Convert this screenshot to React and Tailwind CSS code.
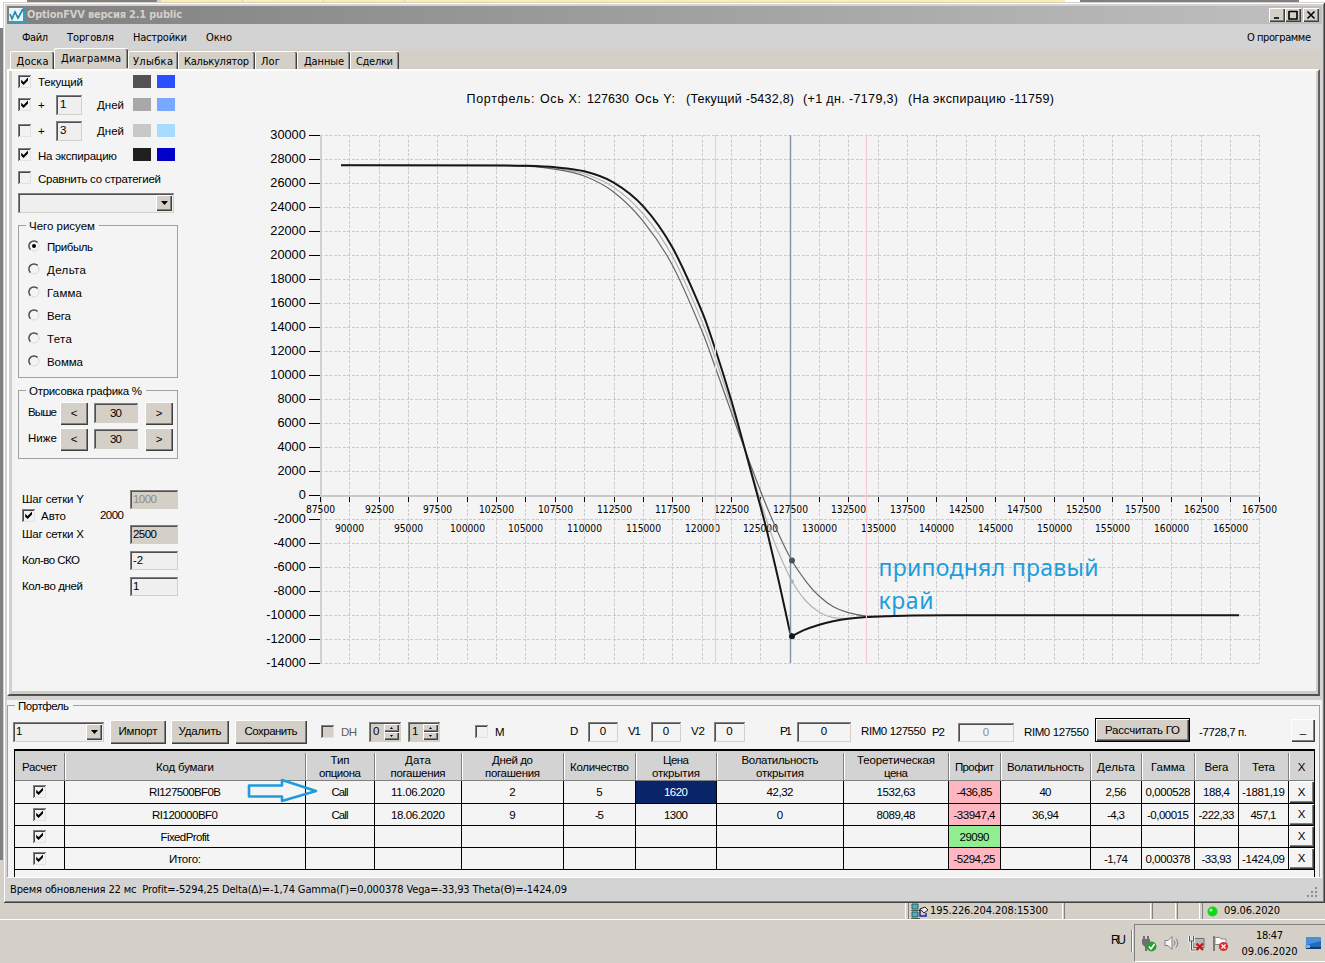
import React, { useLayoutEffect, useRef } from 'react';

const RAISED = 'shadow-[inset_1px_1px_0_#fff,inset_-1px_-1px_0_#404040,inset_-2px_-2px_0_#808080]';
const SUNKEN = 'shadow-[inset_1px_1px_0_#808080,inset_-1px_-1px_0_#d4d0c8,inset_2px_2px_0_#505050]';
const UI = "font-['Liberation_Sans',sans-serif] text-[11.5px]";
const TAHOMA = "font-['DejaVu_Sans_Condensed','DejaVu_Sans',sans-serif] text-[11px]";

// Single-line label whose tracking is tuned so the text spans exactly `w` pixels.
function T({ w, className = '', children }) {
  const ref = useRef(null);
  useLayoutEffect(() => {
    const el = ref.current;
    el.style.letterSpacing = '0px';
    const natural = el.getBoundingClientRect().width;
    const n = el.textContent.length;
    if (w && n > 1) {
      const s = (w - natural) / (n - 1);
      el.style.letterSpacing = s + 'px';
      el.style.marginRight = -s + 'px';
    }
  }, [w, children]);
  return <span ref={ref} className={'inline-block shrink-0 whitespace-pre leading-[13px] ' + className}>{children}</span>;
}

function Check({ on, className = '', fill = 'bg-[#f2f2f2]' }) {
  return (
    <span className={`inline-flex size-[13px] shrink-0 items-center justify-center ${fill} shadow-[inset_1px_1px_0_#808080,inset_-1px_-1px_0_#e4e2de,inset_2px_2px_0_#484848] ${className}`}>
      {on && (
        <svg width="9" height="9" viewBox="0 0 9 9"><path d="M1.2 2.8v2.900L3.600 8 8 3.500V.6L3.600 5z" fill="#000" /></svg>
      )}
    </span>
  );
}

function Input({ className = '', children }) {
  return <div className={`flex shrink-0 items-center ${SUNKEN} ${className}`}>{children}</div>;
}

function Button({ className = '', children }) {
  return <div className={`flex shrink-0 items-center justify-center bg-[#d4d0c8] ${RAISED} ${className}`}>{children}</div>;
}

function Combo({ className = '', children }) {
  return (
    <div className={`flex shrink-0 items-center justify-between bg-[#efefef] p-[2px] ${SUNKEN} ${className}`}>
      <span className="pl-px">{children}</span>
      <Button className="h-full w-4">
        <svg width="7" height="4" viewBox="0 0 7 4"><path d="M0 0h7L3.5 4z" /></svg>
      </Button>
    </div>
  );
}

function Spin({ className = '', children }) {
  return (
    <div className={`flex h-5 w-8 shrink-0 items-center bg-[#d4d0c8] p-[2px] pl-1 ${SUNKEN} ${className}`}>
      <span className="w-[11px]">{children}</span>
      <div className="flex h-full flex-1 flex-col">
        <Button className="flex-1"><svg width="3" height="2" viewBox="0 0 3 2"><path d="M1.5 0L3 2H0z" /></svg></Button>
        <Button className="flex-1"><svg width="3" height="2" viewBox="0 0 3 2"><path d="M1.5 2L3 0H0z" /></svg></Button>
      </div>
    </div>
  );
}

function GroupTitle({ lead, w, children }) {
  return (
    <div className="flex h-[13px] items-start">
      <div className={'mt-[5px] ' + lead} />
      <T w={w}>{children}</T>
      <div className="mt-[5px] ml-1 h-px flex-1 bg-[#a0a0a0]" />
    </div>
  );
}

const TABS = [
  ['Доска', 32, 'ml-[9px] w-[44px] h-[18px] justify-center', false],
  ['Диаграмма', 60, 'w-[74px] h-5 mb-px pl-[6px]', true],
  ['Улыбка', 40, 'w-[50px] h-[18px] pl-1', false],
  ['Калькулятор', 65, 'w-[77px] h-[18px] pl-[5px]', false],
  ['Лог', 19, 'w-[42px] h-[18px] pl-[5px]', false],
  ['Данные', 40, 'w-[53px] h-[18px] pl-[6px]', false],
  ['Сделки', 37, 'w-[49px] h-[18px] pl-[5px]', false],
];

function Swatches({ a, b, className = '' }) {
  return (
    <div className={'flex gap-[6px] ' + className}>
      <div className={'h-[13px] w-[18px] ' + a} />
      <div className={'h-[13px] w-[18px] ' + b} />
    </div>
  );
}

function SidePanel() {
  return (
    <div className="flex w-[168px] shrink-0 flex-col pl-[6px]">
      <div className="flex h-[21px] items-center">
        <Check on />
        <div className="ml-[7px] w-[95px] pt-[3px]"><T w={45}>Текущий</T></div>
        <Swatches a="bg-[#525252]" b="bg-[#2850ff]" />
      </div>
      <div className="flex h-[25px] items-center">
        <Check on />
        <div className="ml-[7px] w-[18px] pt-[2px]"><T>+</T></div>
        <Input className="h-5 w-[26px] bg-[#efefef] pl-1"><T w={5}>1</T></Input>
        <div className="ml-[15px] w-[36px] pt-[2px]"><T w={27}>Дней</T></div>
        <Swatches a="bg-[#a8a8a8]" b="bg-[#78a8ff]" />
      </div>
      <div className="flex h-[27px] items-center">
        <Check />
        <div className="ml-[7px] w-[18px] pt-[2px]"><T>+</T></div>
        <Input className="h-5 w-[26px] bg-[#efefef] pl-1"><T>3</T></Input>
        <div className="ml-[15px] w-[36px] pt-[2px]"><T w={27}>Дней</T></div>
        <Swatches a="bg-[#c8c8c8]" b="bg-[#a8dcff]" />
      </div>
      <div className="flex h-[21px] items-center">
        <Check on />
        <div className="ml-[7px] w-[95px] pt-[4px]"><T w={79}>На экспирацию</T></div>
        <Swatches a="bg-[#202020]" b="bg-[#0000c8]" />
      </div>
      <div className="flex h-[25px] items-center">
        <Check />
        <div className="ml-[7px] pt-[4px]"><T w={123}>Сравнить со стратегией</T></div>
      </div>
      <Combo className="mt-[3px] h-5 w-[156px]" />

      <div className="mt-[7px] flex h-[158px] w-[160px] flex-col">
        <GroupTitle lead="mr-[3px] h-px w-2 bg-[#a0a0a0]" w={66}>Чего рисуем</GroupTitle>
        <div className="-mt-[8px] flex flex-1 flex-col border border-t-0 border-[#a0a0a0] pl-[9px] pt-[10px]">
          {[['Прибыль', 46], ['Дельта', 39], ['Гамма', 35], ['Вега', 24], ['Тета', 25], ['Вомма', 36]].map(([t, w], i) => (
            <div key={t} className="flex h-[23px] items-center">
              <svg width="12" height="12" viewBox="0 0 12 12" className="mb-[2px] shrink-0">
                <circle cx="6" cy="6" r="5" fill="#f4f4f4" stroke="#dcdad6" />
                <path d="M2.4 9.6A5 5 0 0 1 9.6 2.4" fill="none" stroke="#505050" strokeWidth="1.5" />
                {i === 0 && <circle cx="6" cy="6" r="2" />}
              </svg>
              <div className="ml-[7px] pt-[2px]"><T w={w}>{t}</T></div>
            </div>
          ))}
        </div>
      </div>

      <div className="mt-[7px] flex h-[74px] w-[160px] flex-col">
        <GroupTitle lead="mr-[3px] h-px w-2 bg-[#a0a0a0]" w={113}>Отрисовка графика %</GroupTitle>
        <div className="-mt-[8px] flex flex-1 flex-col border border-t-0 border-[#a0a0a0] pl-[9px] pt-[10px]">
          {['Выше', 'Ниже'].map((t) => (
            <div key={t} className="flex h-[26px] items-center">
              <div className="w-8"><T w={29}>{t}</T></div>
              <Button className="h-[23px] w-[28px]"><T>&lt;</T></Button>
              <Input className="ml-[6px] h-5 w-[44px] justify-center bg-[#d4d0c8]"><T w={12}>30</T></Input>
              <Button className="ml-[7px] h-[23px] w-[28px]"><T>&gt;</T></Button>
            </div>
          ))}
        </div>
      </div>

      <div className="mt-[27px] flex h-[26px] items-center pl-1">
        <div className="w-[108px] pt-px"><T w={62}>Шаг сетки Y</T></div>
        <Input className="h-[19px] w-12 bg-[#d4d0c8] pl-[3px] text-[#8c8a84]"><T w={24}>1000</T></Input>
      </div>
      <div className="-mt-[4px] flex h-[14px] items-center pl-1">
        <Check on />
        <div className="ml-[6px] w-[59px] pt-[3px]"><T w={25}>Авто</T></div>
        <T w={24}>2000</T>
      </div>
      <div className="flex h-6 items-center pl-1">
        <div className="w-[108px] pt-[2px]"><T w={62}>Шаг сетки X</T></div>
        <Input className="h-[19px] w-12 bg-[#d4d0c8] pl-[3px]"><T w={24}>2500</T></Input>
      </div>
      <div className="mt-px flex h-[26px] items-center pl-1">
        <div className="w-[108px] pt-[2px]"><T w={58}>Кол-во СКО</T></div>
        <Input className="h-[19px] w-12 bg-[#efefef] pl-[3px]"><T>-2</T></Input>
      </div>
      <div className="flex h-[26px] items-center pl-1">
        <div className="w-[108px] pt-[2px]"><T w={61}>Кол-во дней</T></div>
        <Input className="h-[19px] w-12 bg-[#efefef] pl-[3px]"><T>1</T></Input>
      </div>
    </div>
  );
}

function smooth(p) {
  let d = `M${p[0][0]} ${p[0][1]}`;
  for (let i = 0; i < p.length - 1; i++) {
    const a = p[i - 1] || p[i], b = p[i], c = p[i + 1], e = p[i + 2] || c;
    const h = (c[0] - b[0]) / 3;
    const m1 = c[0] === a[0] ? 0 : (c[1] - a[1]) / (c[0] - a[0]);
    const m2 = e[0] === b[0] ? 0 : (e[1] - b[1]) / (e[0] - b[0]);
    d += `C${b[0] + h} ${b[1] + m1 * h} ${c[0] - h} ${c[1] - m2 * h} ${c[0]} ${c[1]}`;
  }
  return d;
}

const EXPIRY_LEFT = [[341, 165.3], [490, 165.4], [525.7, 165.8], [555.7, 167.3], [584.3, 171.3], [613.3, 182.3], [643.3, 206.3], [672.3, 247.3], [702.3, 312.3], [715.3, 349.3], [731.7, 401.7], [744, 446], [757.5, 495.5], [766.7, 530], [780, 586.7], [787.3, 620], [790, 632], [792, 636]];
const EXPIRY_RIGHT = [[792, 636], [803.3, 630.3], [819.3, 624.7], [833, 621.3], [848.3, 618.7], [866.7, 617], [886.7, 616.3], [913, 615.5], [950, 615.2], [1239, 615.2]];
const CURRENT = [[341, 165.3], [490, 165.4], [525.7, 166.2], [555.7, 169.3], [584.3, 176], [613.3, 191.7], [643.3, 221.3], [672.3, 265], [702.3, 331.7], [715.3, 367.3], [731.7, 413.3], [745, 450], [762.7, 496.5], [778.3, 533.3], [791.7, 560.3], [806.7, 582.3], [819.3, 596.3], [833.3, 606.7], [848.3, 612.6], [866.7, 616], [900, 616]];
const NEXT = [[341, 165.3], [490, 165.4], [525.7, 166], [555.7, 168.3], [584.3, 173.7], [613.3, 187], [643.3, 214], [672.3, 256], [702.3, 322.3], [715.3, 358.3], [731.7, 407.5], [745, 449], [759, 496.5], [771.7, 535], [783.3, 563.3], [792, 581.3], [805, 600], [819.3, 612.3], [833.3, 617.7], [848, 618.2], [880, 616.5]];

const TITLE = [
  ['Портфель:', 466.5, 68], ['Ось X:', 540, 41], ['127630', 587, 42], ['Ось Y:', 635, 40],
  ['(Текущий -5432,8)', 686, 108], ['(+1 дн. -7179,3)', 803, 95], ['(На экспирацию -11759)', 908, 146],
];

function Chart() {
  const ys = Array.from({ length: 23 }, (_, i) => 30000 - i * 2000);
  const xs = Array.from({ length: 33 }, (_, i) => 87500 + i * 2500);
  const X = (v) => Math.round(320 + ((v - 87500) / 2500) * 29.35) + 0.5;
  const Y = (v) => Math.round(495 - v * 0.012) + 0.5;
  return (
    <svg width="1137" height="619" viewBox="180 71 1137 619" className="shrink-0" fontFamily="'Liberation Sans', sans-serif">
      <g stroke="#cccccc" strokeDasharray="3 1.5" shapeRendering="crispEdges">
        {ys.map((v) => <line key={v} x1="320" x2="1259" y1={Y(v)} y2={Y(v)} />)}
        {xs.map((v) => <line key={v} x1={X(v)} x2={X(v)} y1="135" y2="663" />)}
      </g>
      <g shapeRendering="crispEdges">
        <path d="M320.5 135V663" stroke="#d0d0d0" strokeWidth="2" />
        <path d="M320 495.5H1259" stroke="#c8c8c8" strokeWidth="2" />
        {ys.map((v) => <line key={v} x1="309" x2="320" y1={Y(v)} y2={Y(v)} stroke="#000" />)}
        {xs.map((v) => <line key={v} x1={X(v)} x2={X(v)} y1="497" y2="502" stroke="#000" />)}
      </g>
      {TITLE.map(([t, x, w]) => <text key={t} x={x} y="103" fontSize="12.5" textLength={w}>{t}</text>)}
      {ys.map((v) => {
        const s = String(v);
        const w = s.replace('-', '').length * 7.1 + (v < 0 ? 4 : 0);
        return <text key={v} x={305.8 - w} y={Y(v) + 3.5} fontSize="13.6" textLength={w} lengthAdjust="spacingAndGlyphs">{s}</text>;
      })}
      <g fontFamily="'DejaVu Sans Condensed', 'DejaVu Sans', sans-serif" fontSize="10.4">
        {xs.map((v, i) => {
          const w = String(v).length * 5.85;
          return <text key={v} x={X(v) - w / 2} y={i % 2 ? 532 : 513} textLength={w} lengthAdjust="spacingAndGlyphs">{v}</text>;
        })}
      </g>
      <g fill="none">
        <path d={smooth(NEXT)} stroke="#b4b4b4" strokeWidth="1.2" />
        <path d={smooth(CURRENT)} stroke="#666" strokeWidth="1.2" />
        <path d={smooth(EXPIRY_LEFT)} stroke="#161616" strokeWidth="2" />
        <path d={smooth(EXPIRY_RIGHT)} stroke="#161616" strokeWidth="2" />
        <path d="M715.5 135V663M866.5 135V663" stroke="#f8c8d2" strokeWidth="1.2" />
        <path d="M790.5 135V663" stroke="#8094a8" strokeWidth="1.4" />
      </g>
      <circle cx="792" cy="560.5" r="3" fill="#525252" />
      <circle cx="792" cy="581.5" r="2" fill="#b0b0b0" />
      <circle cx="792" cy="636.3" r="3" fill="#161616" />
      <g fill="#1d9ddb" fontFamily="'Noto Sans', sans-serif" fontSize="23">
        <text x="878.5" y="576" textLength="220">приподнял правый</text>
        <text x="878.5" y="609" textLength="55">край</text>
      </g>
    </svg>
  );
}

const HEAD = [
  [['Расчет', 35]], [['Код бумаги', 58]], [['Тип', 19], ['опциона', 42]], [['Дата', 26], ['погашения', 55]],
  [['Дней до', 41], ['погашения', 55]], [['Количество', 59]], [['Цена', 26], ['открытия', 48]],
  [['Волатильность', 77], ['открытия', 48]], [['Теоретическая', 78], ['цена', 24]], [['Профит', 39]],
  [['Волатильность', 77]], [['Дельта', 38]], [['Гамма', 34]], [['Вега', 24]], [['Тета', 23]], [['X', 8]],
];

const ROWS = [
  [['RI127500BF0B', 72], ['Call', 17], ['11.06.2020', 54], ['2'], ['5'], ['1620', 24], ['42,32', 27], ['1532,63', 39], ['-436,85', 36], ['40', 12], ['2,56', 21], ['0,000528', 45], ['188,4', 27], ['-1881,19', 43]],
  [['RI120000BF0', 66], ['Call', 17], ['18.06.2020', 54], ['9'], ['-5', 9], ['1300', 24], ['0'], ['8089,48', 39], ['-33947,4', 42], ['36,94', 27], ['-4,3', 18], ['-0,00015', 42], ['-222,33', 36], ['457,1', 26]],
  [['FixedProfit', 49], null, null, null, null, null, null, null, ['29090', 30], null, null, null, null, null],
  [['Итого:', 32], null, null, null, null, null, null, null, ['-5294,25', 42], null, ['-1,74', 24], ['0,000378', 45], ['-33,93', 30], ['-1424,09', 43]],
];

function cellTone(r, c) {
  if (r === 0 && c === 5) return 'bg-[#0a246a] text-white';
  if (c === 8) return r === 2 ? 'bg-[#90ee90]' : 'bg-[#ffb6c1]';
  return '';
}

const COLS = 'grid grid-cols-[50px_241px_69px_87px_102px_72px_81px_127px_105px_52px_90px_51px_53px_44px_50px_25px]';

function Portfolio() {
  return (
    <div className="relative ml-[6px] h-[128px] w-[1301px] border-t-2 border-r border-l border-black">
      <div className={COLS + ' h-[30px] border-b border-[#808080] bg-[#d3d3d3]'}>
        {HEAD.map((lines, i) => (
          <div key={i} className="flex items-stretch py-[2px]">
            <div className="flex flex-1 flex-col items-center justify-center pt-px">
              {lines.map(([t, w]) => <T key={t} w={w}>{t}</T>)}
            </div>
            {i < 15 && <div className="w-px bg-[#808080] shadow-[1px_0_0_#fff]" />}
          </div>
        ))}
      </div>
      {ROWS.map((row, r) => (
        <div key={r} className={COLS + ' border-b border-black ' + (r ? 'h-[22px]' : 'h-[23px]')}>
          <div className="flex items-center justify-center border-r border-black pb-px"><Check on /></div>
          {row.map((c, i) => (
            <div key={i} className={'flex items-center justify-center border-r border-black pt-px ' + cellTone(r, i)}>
              {c && <T w={c[1]}>{c[0]}</T>}
            </div>
          ))}
          <div className={'flex items-center justify-center bg-[#f4f4f4] ' + RAISED}><T w={8}>X</T></div>
        </div>
      ))}
      <svg className="absolute top-[27px] left-[232px]" width="72" height="26" viewBox="0 0 72 26">
        <path d="M2 7.5H35V2L69 13 35 23V18.5H2Z" fill="none" stroke="#1d9ddb" strokeWidth="2.6" strokeLinejoin="round" />
      </svg>
    </div>
  );
}

function Toolbar() {
  return (
    <div className="flex h-[27px] shrink-0 items-center pl-[5px]">
      <Combo className="h-5 w-[91px]"><T>1</T></Combo>
      <Button className="ml-[6px] h-6 w-[56px]"><T w={39}>Импорт</T></Button>
      <Button className="ml-[5px] h-6 w-[58px]"><T w={43}>Удалить</T></Button>
      <Button className="ml-[6px] h-6 w-[72px]"><T w={53}>Сохранить</T></Button>
      <Check className="ml-[14px]" fill="bg-[#d4d0c8]" />
      <div className="ml-[7px] w-[28px] pt-[3px] text-[#606060]"><T w={16}>DH</T></div>
      <Spin className="mt-px"><T>0</T></Spin>
      <Spin className="mt-px ml-[7px]"><T>1</T></Spin>
      <Check className="ml-[35px]" />
      <div className="ml-[7px] w-[75px] pt-[2px]"><T>M</T></div>
      <div className="w-[18px]"><T w={7}>D</T></div>
      <Input className="h-5 w-[30px] justify-center"><T>0</T></Input>
      <div className="ml-[10px] w-[23px]"><T w={13}>V1</T></div>
      <Input className="h-5 w-[30px] justify-center"><T>0</T></Input>
      <div className="ml-[10px] w-[23px]"><T w={14}>V2</T></div>
      <Input className="h-5 w-[31px] justify-center"><T>0</T></Input>
      <div className="ml-[35px] w-[17px]"><T w={12}>P1</T></div>
      <Input className="h-5 w-[54px] justify-center"><T>0</T></Input>
      <div className="ml-[10px] w-[71px]"><T w={65}>RIM0 127550</T></div>
      <div className="w-[26px] pt-[2px]"><T w={13}>P2</T></div>
      <Input className="mt-[2px] h-[19px] w-[56px] justify-center text-[#8c8c8c]"><T>0</T></Input>
      <div className="ml-[10px] w-[71px] pt-[2px]"><T w={65}>RIM0 127550</T></div>
      <div className="-mt-[3px] h-6 w-[95px] shrink-0 border border-black">
        <Button className="h-full w-full"><T w={75}>Рассчитать ГО</T></Button>
      </div>
      <div className="ml-[9px] w-[92px] pt-[2px]"><T w={48}>-7728,7 п.</T></div>
      <div className={'-mt-[3px] flex h-[23px] w-6 shrink-0 items-center justify-center ' + RAISED}>_</div>
    </div>
  );
}

function Caption({ d, className = '' }) {
  return (
    <Button className={'h-[14px] w-4 ' + className}>
      <svg width="10" height="10" viewBox="0 0 10 10" fill="none" stroke="#000"><path d={d} strokeWidth="1.6" /></svg>
    </Button>
  );
}

function AppWindow() {
  return (
    <div className="flex h-[901px] w-[1322px] shrink-0 flex-col bg-[#d3d3d3] p-1 pr-[3px] pb-0 shadow-[inset_1px_1px_0_#d4d0c8,inset_-1px_-1px_0_#404040,inset_2px_2px_0_#fff,inset_-2px_-2px_0_#808080]">
      <div className="flex h-[18px] shrink-0 items-center bg-linear-to-r from-[#808080] to-[#c0c0c0] pl-[2px]">
        <svg width="16" height="16" viewBox="0 0 16 16" className="shrink-0">
          <rect width="16" height="16" fill="#3a9ab8" />
          <rect x="0" y="1" width="14" height="13" fill="#eaf6fa" />
          <path d="M1 7l2 5 3-7 3 6 5-9" fill="none" stroke="#1c87a8" strokeWidth="1.6" />
        </svg>
        <div className="ml-[2px] flex-1 font-['DejaVu_Sans_Condensed','DejaVu_Sans',sans-serif] text-[11px] font-bold text-[#d4d0c8]"><T w={155}>OptionFVV версия 2.1 public</T></div>
        <Caption d="M2 8H7" />
        <Caption d="M1 1.5H9M1 1V9H9V1" />
        <Caption className="ml-[2px] mr-[3px]" d="M1.5 1.5L8.5 8.5M8.5 1.5L1.5 8.5" />
      </div>
      <div className={'flex h-[25px] shrink-0 items-center pt-[3px] pl-[15px] ' + TAHOMA}>
        <div className="w-[45px]"><T w={26}>Файл</T></div>
        <div className="w-[66px]"><T w={47}>Торговля</T></div>
        <div className="w-[73px]"><T w={54}>Настройки</T></div>
        <div className="flex-1"><T w={26}>Окно</T></div>
        <div className="pr-[11px]"><T w={64}>О программе</T></div>
      </div>
      <div className="flex h-5 shrink-0 items-end bg-[#d4d0c8]">
        <div className="-ml-[6px] flex items-end">
          {TABS.map(([t, w, c, active]) => (
            <div key={t} className={`flex shrink-0 items-center rounded-t-[2px] border-t border-l border-white shadow-[inset_-1px_0_0_#404040,inset_-2px_0_0_#909090] ${active ? 'bg-[#d4d0c8] pb-[1px]' : 'pt-[2px]'} ${c} ${TAHOMA}`}>
              <T w={w}>{t}</T>
            </div>
          ))}
        </div>
      </div>
      <div className="mr-[2px] flex h-[627px] shrink-0 border-t-2 border-r-2 border-b-2 border-l-2 border-t-white border-r-[#606060] border-b-[#505050] border-l-white bg-[#f4f4f4] shadow-[inset_3px_0_0_#d4d0c8,inset_-2px_-3px_0_#d0cec8]">
        <div className="flex pl-[3px]">
          <SidePanel />
          <Chart />
        </div>
      </div>
      <div className="mt-[4px] flex h-[177px] shrink-0 flex-col bg-[#f4f4f4]">
        <div className="mr-[2px] flex flex-1 flex-col">
          <GroupTitle lead="mr-[3px] h-px w-2 bg-[#a0a0a0]" w={51}>Портфель</GroupTitle>
          <div className="-mt-[8px] flex flex-1 flex-col border-r border-l border-[#a0a0a0] pt-[13px]">
            <Toolbar />
            <div className="pt-[4px]"><Portfolio /></div>
          </div>
        </div>
      </div>
      <div className={'flex flex-1 items-center justify-between border-t border-white pl-[3px] ' + TAHOMA}>
        <T w={557} className="-mt-[2px]">{'Время обновления 22 мс  Profit=-5294,25 Delta(Δ)=-1,74 Gamma(Γ)=0,000378 Vega=-33,93 Theta(Θ)=-1424,09'}</T>
        <svg width="12" height="12" viewBox="0 0 12 12" className="mt-1 mr-[3px]" fill="#8c8c8c">
          <path d="M8 0h2v2H8zM8 4h2v2H8zM8 8h2v2H8zM4 4h2v2H4zM4 8h2v2H4zM0 8h2v2H0z" />
        </svg>
      </div>
    </div>
  );
}

function Taskbar() {
  return (
    <div className={'flex h-[60px] shrink-0 flex-col ' + TAHOMA}>
      <div className="flex h-[17px] border-b border-white">
        <div className="w-[906px] border-r border-white" />
        <div className="ml-[2px] flex w-[155px] items-center border-r border-l border-r-white border-l-[#808080] pl-[2px]">
          <svg width="17" height="16" viewBox="0 0 17 16">
            <path d="M1 1h6v5H1zM1 9h6v5H1z" fill="#30c0c0" stroke="#405050" />
            <path d="M0 7.5h9M0 15.5h9" stroke="#555" />
            <path d="M9 6l5-2 3 3-4 3z" fill="#e8e8e8" stroke="#222" />
            <path d="M9 6v7h6v-3" fill="none" stroke="#2020a0" strokeWidth="1.5" />
          </svg>
          <div className="ml-[2px] pt-px"><T w={118}>195.226.204.208:15300</T></div>
        </div>
        <div className="ml-px w-[87px] border-r border-l border-r-white border-l-[#808080]" />
        <div className="ml-px w-[24px] border-r border-l border-r-white border-l-[#808080]" />
        <div className="ml-px w-[23px] border-r border-l border-r-white border-l-[#808080]" />
        <div className="ml-[2px] flex flex-1 items-center border-l border-[#808080] pl-1">
          <svg width="11" height="11" viewBox="0 0 11 11"><circle cx="5.5" cy="5.5" r="5" fill="#10d818" /><circle cx="4" cy="4" r="1.6" fill="#a0ffa0" /></svg>
          <div className="ml-[6px] pt-px"><T w={56}>09.06.2020</T></div>
        </div>
      </div>
      <div className="flex flex-1 items-start justify-end pt-[4px]">
        <div className="mt-[9px]"><T w={15} className="font-['Liberation_Sans',sans-serif] text-[12px]">RU</T></div>
        <div className="mt-[6px] ml-[5px] h-[22px] w-px bg-[#808080] shadow-[1px_0_0_#fff]" />
        <div className="ml-[2px] flex h-[38px] w-[191px] items-center border-t border-b border-l border-t-[#808080] border-b-white border-l-[#808080] pl-[5px]">
          <svg width="17" height="17" viewBox="0 0 17 17">
            <path d="M3 1h2v3h2V1h2v3h1v5l-3 3v4H5v-4L2 9V4h1z" fill="#707070" />
            <circle cx="11.5" cy="11.5" r="5" fill="#28a030" /><path d="M9 11.5l2 2.500 3.500-5" fill="none" stroke="#fff" strokeWidth="1.5" />
          </svg>
          <svg width="17" height="16" viewBox="0 0 17 16" className="ml-[7px]" fill="none" stroke="#808080">
            <path d="M1 5.500h3L8 1.500v13L4 10.500H1z" fill="#f4f4f4" />
            <path d="M10 5.500q2 2.500 0 5M12 3.500q3.500 4.500 0 9" />
          </svg>
          <svg width="17" height="17" viewBox="0 0 17 17" className="ml-[7px]">
            <path d="M5 3.500h11v9H5z" fill="#b8b8b8" stroke="#707070" />
            <path d="M1.500 1v5h4V1M3.500 6v9h4" fill="none" stroke="#fff" strokeWidth="2.6" />
            <path d="M1.500 1v5h4V1M3.500 6v9h4" fill="none" stroke="#555" strokeWidth="1.1" />
            <path d="M8.500 8.500l6.500 6.500M15 8.500L8.500 15" stroke="#c01818" strokeWidth="2.4" />
          </svg>
          <svg width="17" height="17" viewBox="0 0 17 17" className="ml-[7px]">
            <path d="M2 1v15" stroke="#666" strokeWidth="1.6" />
            <path d="M3 2.500h5l1 1.500h5v7H9L8 9.500H3z" fill="#fff" stroke="#888" />
            <circle cx="11.5" cy="11.5" r="4.6" fill="#d83030" /><path d="M9.500 9.500l4 4M13.500 9.500l-4 4" stroke="#fff" strokeWidth="1.3" />
          </svg>
          <div className="ml-[12px] flex w-[57px] flex-col items-center gap-[3px]">
            <T w={27}>18:47</T>
            <T w={56}>09.06.2020</T>
          </div>
          <svg width="16" height="14" viewBox="0 0 16 14" className="ml-[7px]">
            <path d="M1 1h15v10H1z" fill="#2868b8" /><path d="M1 1h15v4L1 9z" fill="#4a90d8" />
            <path d="M1 11h15v2H1z" fill="#183868" /><path d="M0 9h5v3H0z" fill="#70b8e8" />
          </svg>
        </div>
      </div>
    </div>
  );
}

export default function App() {
  return (
    <div className={'flex h-[963px] w-[1325px] flex-col overflow-hidden bg-[#d4d0c8] text-black ' + UI}>
      <div className="flex h-[2px] shrink-0">
        <div className="w-[27px] bg-white" />
        <div className="w-[130px] bg-[#808080]" />
        <div className="w-[4px] bg-[#d4d0c8]" />
        <div className="w-[82px] border-r border-[#d4d0c8] bg-[#ffeeaa]" />
        <div className="w-[81px] border-r border-[#d4d0c8] bg-[#ffeeaa]" />
        <div className="w-[81px] border-r border-[#d4d0c8] bg-[#ffeeaa]" />
        <div className="w-[660px] bg-[#ffeeaa]" />
        <div className="w-[15px] bg-white" />
        <div className="w-[219px] bg-[#808080]" />
        <div className="flex-1 bg-white" />
      </div>
      <div className="flex shrink-0">
        <div className="flex w-[3px] flex-col">
          <div className="h-[26px] bg-white" />
          <div className="h-[832px] bg-[#808080]" />
          <div className="flex-1 bg-[#d4d0c8]" />
        </div>
        <AppWindow />
      </div>
      <Taskbar />
    </div>
  );
}
